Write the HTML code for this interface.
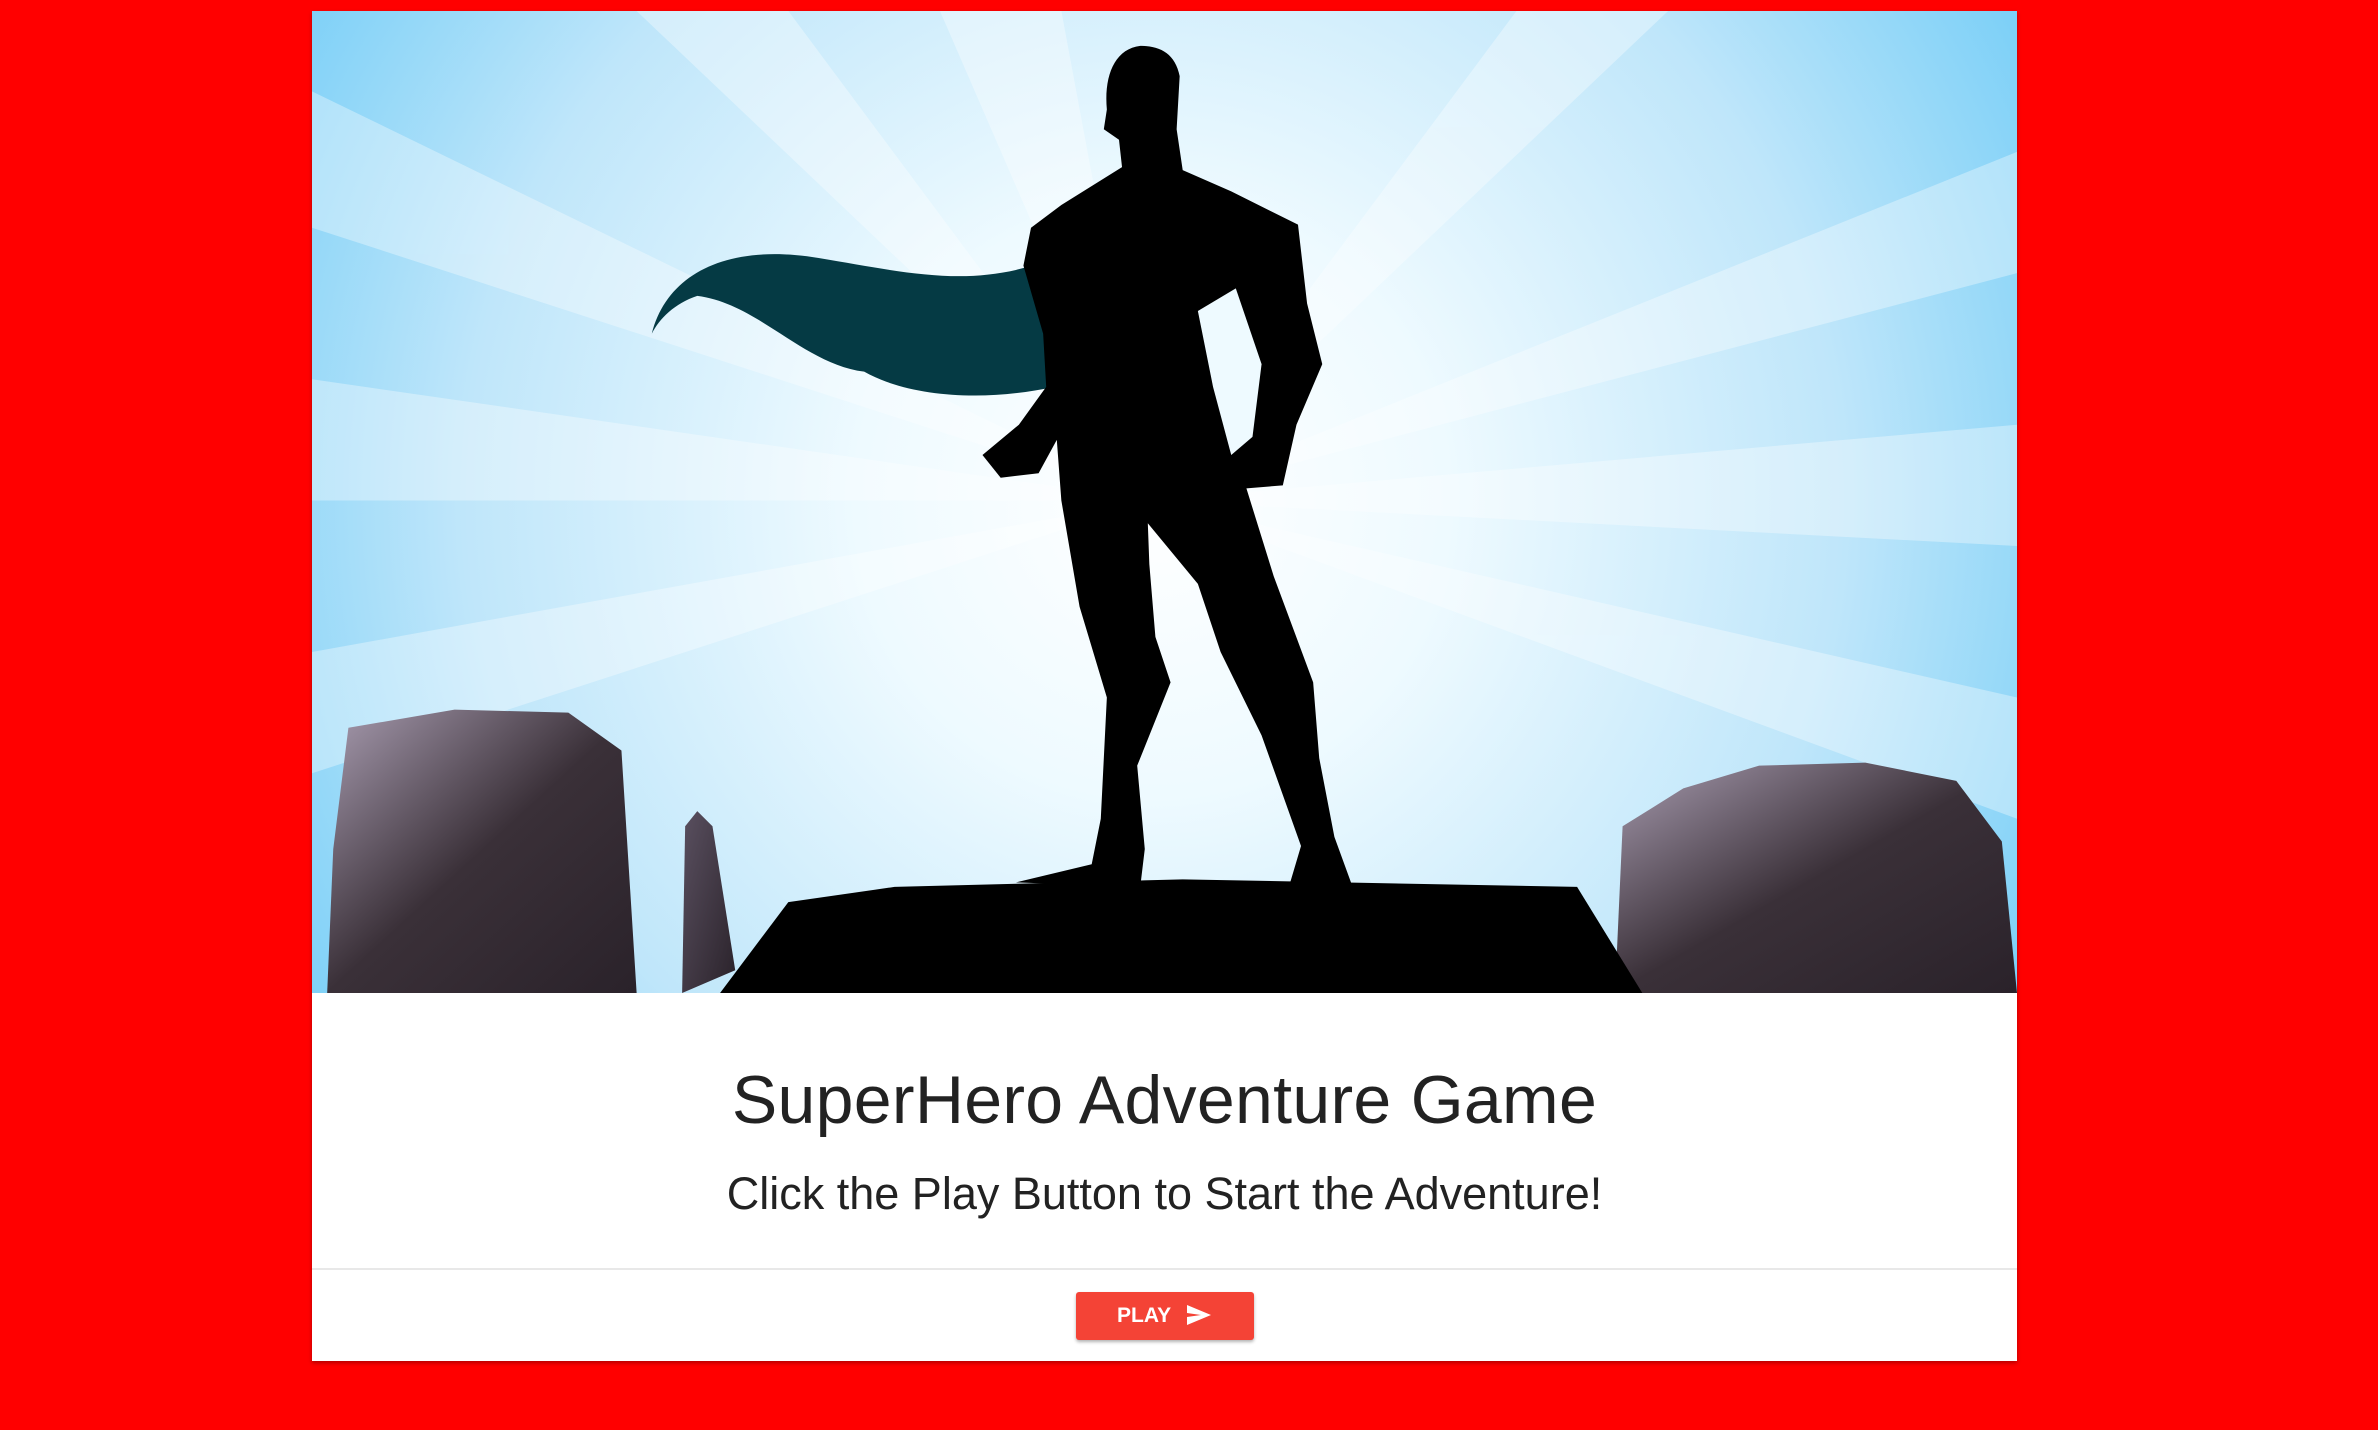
<!DOCTYPE html>
<html><head><meta charset="utf-8"><style>
html,body{margin:0;padding:0;width:2378px;height:1430px;background:#ff0000;overflow:hidden;font-family:"Liberation Sans",Roboto,sans-serif}
.card{position:absolute;left:312px;top:11px;width:1705px;height:1350px;background:#fff;box-shadow:0 2px 4px rgba(0,0,0,.3)}
.img{position:absolute;left:0;top:0;width:1705px;height:982px}
h1{position:absolute;left:0;right:0;top:1050px;margin:0;text-align:center;font-weight:400;font-size:68px;color:#222;letter-spacing:0.3px}
h2{position:absolute;left:0;right:0;top:1157px;margin:0;text-align:center;font-weight:400;font-size:45px;color:#222}
.div{position:absolute;left:0;right:0;top:1257px;height:2px;background:#e8e8e8}
.btn{position:absolute;left:764px;top:1281px;width:178px;height:48px;background:#f44336;border-radius:3px;box-shadow:0 2px 3px rgba(0,0,0,.3);color:#fff;font-weight:700;font-size:21px}
.btn span{position:absolute;left:41px;top:12px}
.btn svg{position:absolute;left:111px;top:13px}
</style></head><body>
<div class="card">
<svg class="img" viewBox="206 7 1124 648" preserveAspectRatio="none">
<defs>
<radialGradient id="sky" cx="760" cy="330" r="650" gradientUnits="userSpaceOnUse">
<stop offset="0" stop-color="#ffffff"/><stop offset="0.3" stop-color="#eefaff"/><stop offset="0.7" stop-color="#bfe6fa"/><stop offset="1" stop-color="#7dd0f7"/></radialGradient>
<linearGradient id="rock" x1="0" y1="0" x2="1" y2="1"><stop offset="0" stop-color="#5a5060"/><stop offset="1" stop-color="#2a222a"/></linearGradient>
<linearGradient id="rock2" x1="0" y1="0" x2="1" y2="1"><stop offset="0" stop-color="#a89cb0"/><stop offset="0.5" stop-color="#3a3038"/><stop offset="1" stop-color="#2a222a"/></linearGradient>
</defs>
<rect x="206" y="7" width="1124" height="648" fill="url(#sky)"/>
<g fill="#ffffff" opacity="0.35">
<polygon points="760,330 206,60 206,150"/><polygon points="760,330 206,250 206,330"/><polygon points="760,330 206,430 206,510"/>
<polygon points="760,330 420,7 520,7"/><polygon points="760,330 1000,7 1100,7"/><polygon points="760,330 1330,100 1330,180"/>
<polygon points="760,330 1330,280 1330,360"/><polygon points="760,330 1330,460 1330,540"/><polygon points="760,330 620,7 700,7"/>
</g>
<path d="M430,220 C440,180 480,160 540,170 C600,180 640,190 690,172 L695,255 C650,265 600,262 570,245 C530,240 500,200 460,195 C445,200 435,210 430,220Z" fill="#053a44"/>
<path d="M230,480 L300,468 L375,470 L410,495 L420,655 L216,655 L220,560Z" fill="url(#rock2)"/>
<path d="M452,545 L460,535 L470,545 L485,640 L450,655Z" fill="url(#rock)"/>
<path d="M1070,545 L1110,520 L1160,505 L1230,503 L1290,515 L1320,555 L1330,655 L1065,655Z" fill="url(#rock2)"/>
<path d="M475,655 L520,595 L590,585 L780,580 L1040,585 L1083,655Z" fill="#000"/>
<path d="M752,30 C735,32 728,50 730,72 L728,85 L738,92 L740,110 L700,135 L680,150 L675,175 L688,220 L690,255 L672,280 L648,300 L660,315 L685,312 L697,290 L700,330 L712,400 L730,460 L726,540 L720,570 L670,582 L752,585 L755,560 L750,505 L772,450 L762,420 L758,372 L757,345 L790,385 L805,430 L832,485 L858,558 L850,585 L892,585 L880,552 L870,500 L866,450 L840,380 L822,322 L846,320 L855,280 L872,240 L862,200 L856,148 L812,126 L780,112 L776,85 L778,50 C775,35 765,30 752,30Z" fill="#000"/>
<path d="M790,205 L815,190 L832,240 L826,288 L812,300 L800,255Z" fill="#eefaff"/>
</svg>
<h1>SuperHero Adventure Game</h1>
<h2>Click the Play Button to Start the Adventure!</h2>
<div class="div"></div>
<div class="btn"><span>PLAY</span><svg width="24" height="20" viewBox="0 0 24 20"><path d="M0,0 L24,10 L0,20 L0,12 L14,10 L0,8Z" fill="#fff"/></svg></div>
</div>
</body></html>
